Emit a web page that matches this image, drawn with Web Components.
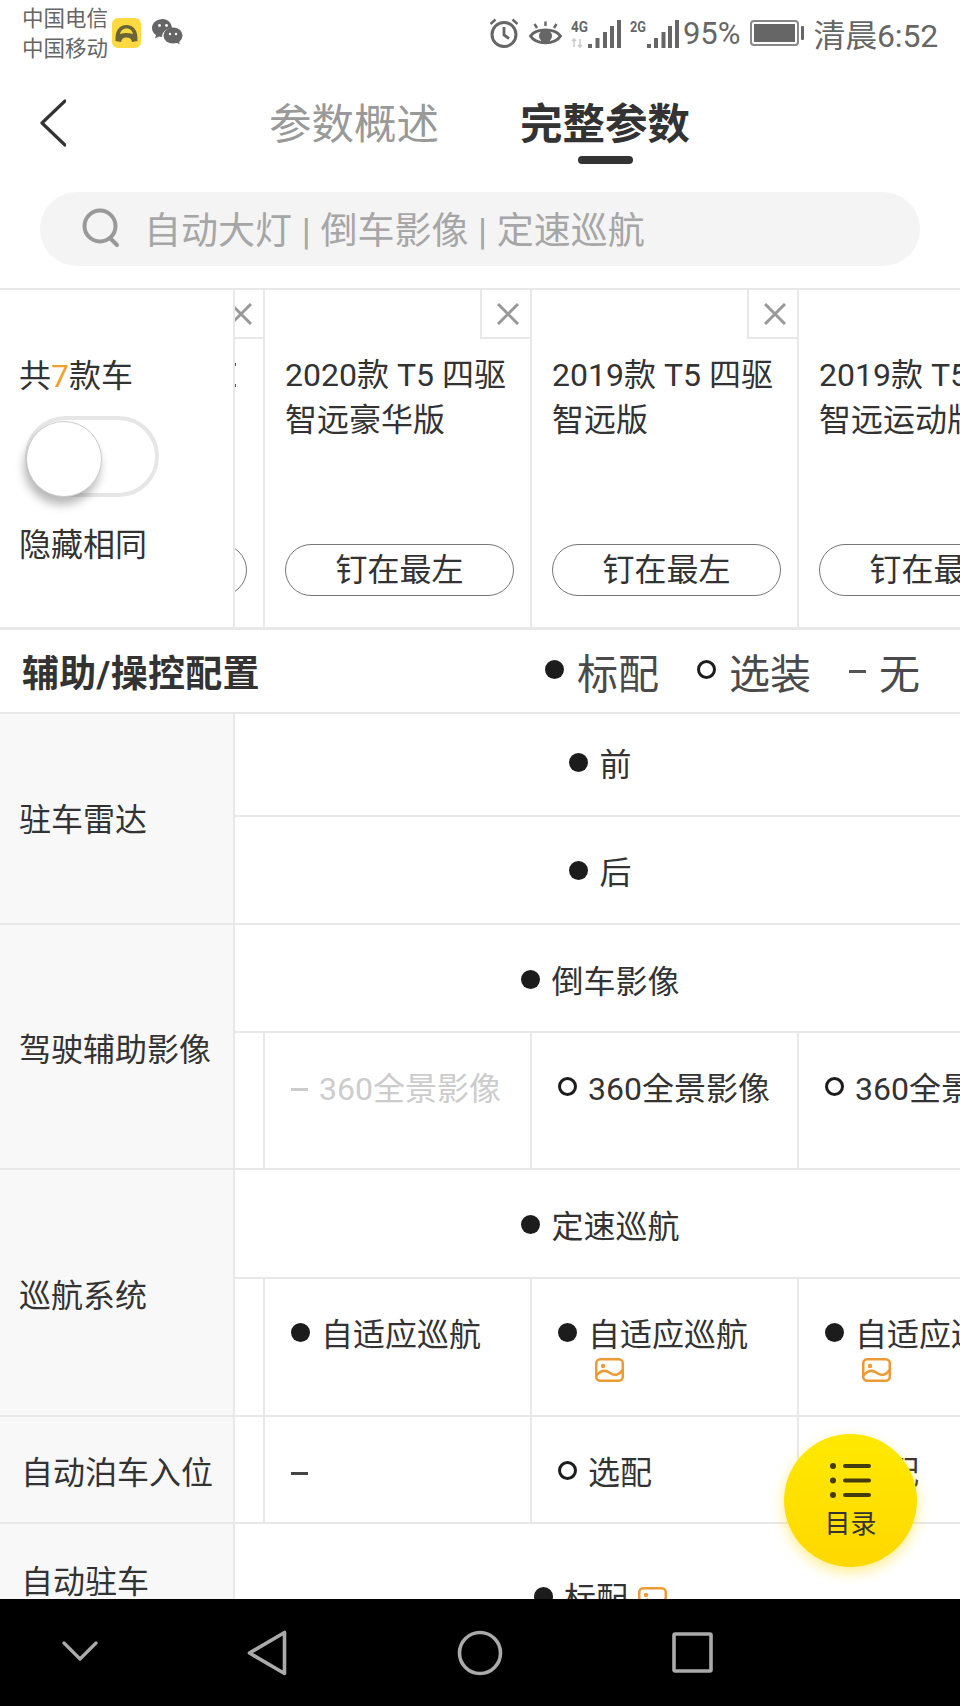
<!DOCTYPE html>
<html lang="zh-CN">
<head>
<meta charset="utf-8">
<title>完整参数</title>
<style>
  html, body { margin: 0; padding: 0; background: #fff; }
  body { font-family: Roboto, "Noto Sans CJK SC", sans-serif; color: #333; }
</style>
</head>
<body>
<app-screen>
  <status-bar></status-bar>
  <nav-tabs></nav-tabs>
  <search-box>自动大灯 | 倒车影像 | 定速巡航</search-box>
  <car-head>
    <car-cell stub></car-cell>
    <car-cell>2020款 T5 四驱<br>智远豪华版</car-cell>
    <car-cell>2019款 T5 四驱<br>智远版</car-cell>
    <car-cell>2019款 T5 四驱<br>智远运动版</car-cell>
  </car-head>
  <section-legend>辅助/操控配置</section-legend>
  <spec-table>
    <spec-group label="驻车雷达" lift="4">
      <spec-full h="103" top="28"><spec-val type="dot">前</spec-val></spec-full>
      <spec-full h="108"><spec-val type="dot">后</spec-val></spec-full>
    </spec-group>
    <spec-group label="驾驶辅助影像">
      <spec-full h="108" top="34"><spec-val type="dot">倒车影像</spec-val></spec-full>
      <spec-cells h="137">
        <spec-cell></spec-cell>
        <spec-cell><spec-val type="dash" muted>360全景影像</spec-val></spec-cell>
        <spec-cell><spec-val type="ring">360全景影像</spec-val></spec-cell>
        <spec-cell><spec-val type="ring">360全景影像</spec-val></spec-cell>
      </spec-cells>
    </spec-group>
    <spec-group label="巡航系统">
      <spec-full h="109" top="34"><spec-val type="dot">定速巡航</spec-val></spec-full>
      <spec-cells h="138">
        <spec-cell></spec-cell>
        <spec-cell><spec-val type="dot">自适应巡航</spec-val></spec-cell>
        <spec-cell><spec-val type="dot" pic="below">自适应巡航</spec-val></spec-cell>
        <spec-cell><spec-val type="dot" pic="below">自适应巡航</spec-val></spec-cell>
      </spec-cells>
    </spec-group>
    <spec-group label="自动泊车入位" indent="21">
      <spec-cells h="107">
        <spec-cell></spec-cell>
        <spec-cell><spec-val type="dash"></spec-val></spec-cell>
        <spec-cell><spec-val type="ring">选配</spec-val></spec-cell>
        <spec-cell><spec-val type="ring">选配</spec-val></spec-cell>
      </spec-cells>
    </spec-group>
    <spec-group label="自动驻车" indent="21">
      <spec-full h="112" top="52"><spec-val type="dot" pic="inline">标配</spec-val></spec-full>
    </spec-group>
  </spec-table>
  <bottom-nav></bottom-nav>
  <float-menu>目录</float-menu>
</app-screen>

<script>
function define(name, css, html, setup) {
  customElements.define(name, class extends HTMLElement {
    constructor() {
      super();
      this.attachShadow({ mode: 'open' });
    }
    connectedCallback() {
      this.shadowRoot.innerHTML = `<style>${css}</style>${typeof html === 'function' ? html(this) : html}`;
      if (setup) setup(this);
    }
  });
}

const line = '#e8e8e8';

define('app-screen', `
  :host { display: flex; flex-direction: column; position: relative; width: 960px; height: 1706px; overflow: hidden; background: #fff; }
`, `<slot></slot>`);

define('status-bar', `
  :host { display: flex; flex: 0 0 66px; height: 66px; padding: 0 22px; box-sizing: border-box; color: #666; }
  .carriers { font-size: 21.5px; line-height: 30px; padding-top: 4px; width: 88px; white-space: nowrap; }
  .left { display: flex; align-items: flex-start; }
  .app { margin: 18px 0 0 2px; }
  .chat { margin: 19px 0 0 11px; }
  .right { margin-left: auto; margin-right: 0; display: flex; align-items: center; height: 66px; }
  svg { display: block; }
  svg text { font-family: Roboto, sans-serif; font-weight: 700; font-size: 14px; fill: #666; }
  .pct { font-size: 31px; margin: 0 10px 0 4px; }
  .time { font-size: 32px; margin-left: 9px; letter-spacing: -.2px; white-space: nowrap; }
`, `
  <div class="left">
    <div class="carriers">中国电信<br>中国移动</div>
    <svg class="app" width="29" height="30" viewBox="0 0 29 30">
      <rect width="29" height="30" rx="6" fill="#ffd940"/>
      <path d="M3.500 23C3 12 7.500 7 14.500 7s11.500 5 11 16l-5.500 1c-.5-3-2-4.500-5.500-4.500S9.500 21 9 24z" fill="#6b6436"/>
      <path d="M8 16c1-4 3.500-5.500 6.500-5.500S20 12 21 16c-4-1.200-9-1.200-13 0z" fill="#ffd940"/>
    </svg>
    <svg class="chat" width="31" height="26" viewBox="0 0 31 26">
      <path d="M11 0C5 0 0 3.800 0 9c0 3 1.600 5.400 4 7l-1 3.500L7 17.500c1 .3 2 .4 3 .4 0-5 4.500-9 10-9C19.500 3.500 15.500 0 11 0z" fill="#666"/>
      <ellipse cx="21" cy="16.500" rx="9.500" ry="8" fill="#666"/>
      <path d="M24 23l3.500 2.500-.5-4.500z" fill="#666"/>
      <circle cx="7.500" cy="6.500" r="1.400" fill="#fff"/><circle cx="14.500" cy="6.500" r="1.400" fill="#fff"/>
      <circle cx="18" cy="15" r="1.200" fill="#fff"/><circle cx="24" cy="15" r="1.200" fill="#fff"/>
    </svg>
  </div>
  <div class="right">
    <svg width="30" height="30" viewBox="0 0 30 30" fill="none" stroke="#666" stroke-width="3">
      <circle cx="15" cy="16.500" r="12"/>
      <path d="M15 9v8l5 3.500" stroke-width="2.800"/>
      <path d="M1.500 6l5-4.500M28.500 6l-5-4.500" stroke-width="2.400"/>
    </svg>
    <svg style="margin-left:10px" width="33" height="30" viewBox="0 0 33 30">
      <path d="M1.500 18C7 10 26 10 31.500 18 26 27 7 27 1.500 18z" fill="none" stroke="#666" stroke-width="3"/>
      <circle cx="16.500" cy="18" r="6.500" fill="#666"/>
      <path d="M8 10L5.500 6M16.500 8V3.500M25 10l2.500-4" stroke="#666" stroke-width="2.400" fill="none"/>
    </svg>
    <svg style="margin-left:9px" width="50" height="30" viewBox="0 0 50 30">
      <text x="0" y="14" textLength="17" lengthAdjust="spacingAndGlyphs">4G</text>
      <path d="M3 29v-8M1 23l2-2 2 2M9 21v8M7 27l2 2 2-2" stroke="#ccc" stroke-width="1.600" fill="none"/>
      <g fill="#666">
        <rect x="17" y="26" width="4" height="4"/><rect x="24.500" y="20" width="4" height="10"/>
        <rect x="32" y="14" width="4" height="16"/><rect x="39" y="8" width="4" height="22"/>
        <rect x="46" y="2" width="4" height="28"/>
      </g>
    </svg>
    <svg style="margin-left:9px" width="49" height="30" viewBox="0 0 49 30">
      <text x="0" y="14" textLength="16" lengthAdjust="spacingAndGlyphs">2G</text>
      <g fill="#666">
        <rect x="17" y="26" width="4" height="4"/><rect x="24" y="20" width="4" height="10"/>
        <rect x="31.500" y="14" width="4" height="16"/><rect x="38" y="8" width="4" height="22"/>
        <rect x="45" y="2" width="4" height="28"/>
      </g>
    </svg>
    <span class="pct">95%</span>
    <svg width="54" height="26" viewBox="0 0 54 26">
      <rect x="1" y="1" width="47" height="24" rx="3" fill="none" stroke="#888" stroke-width="2"/>
      <rect x="4" y="4" width="41" height="18" fill="#666"/>
      <rect x="51" y="6" width="3" height="14" rx="1" fill="#666"/>
    </svg>
    <span class="time">清晨6:52</span>
  </div>
`);

define('nav-tabs', `
  :host { display: flex; flex: 0 0 114px; height: 114px; box-sizing: border-box; padding: 31px 0 0 40px; align-items: flex-start; }
  svg { display: block; margin-top: 2px; }
  .tabs { display: flex; gap: 81px; margin-left: 203px; }
  .tab { display: flex; flex-direction: column; align-items: center; font-size: 42.500px; line-height: 56px; color: #999; white-space: nowrap; }
  .on { color: #333; font-weight: 700; }
  .bar { width: 55px; height: 8px; margin-top: 3px; border-radius: 4px; background: #333; }
`, `
  <svg width="26" height="48" viewBox="0 0 26 48" fill="none" stroke="#333" stroke-width="3.200" stroke-linecap="round" stroke-linejoin="round">
    <path d="M25 2L2 24l23 22"/>
  </svg>
  <div class="tabs">
    <div class="tab">参数概述</div>
    <div class="tab on">完整参数<div class="bar"></div></div>
  </div>
`);

define('search-box', `
  :host { display: flex; align-items: center; flex: 0 0 74px; height: 74px; margin: 12px 40px 22px; padding-left: 42px; box-sizing: border-box; border-radius: 37px; background: #f4f4f4; color: #a6a6a6; font-size: 37px; white-space: nowrap; }
  svg { display: block; margin-right: 24px; margin-top: -2px; }
  .txt { margin-top: -2px; word-spacing: .5px; }
`, `
  <svg width="38" height="40" viewBox="0 0 38 40" fill="none" stroke="#999" stroke-width="4">
    <circle cx="18" cy="18" r="15.500"/>
    <path d="M28 30l7 7" stroke-linecap="round"/>
  </svg>
  <span class="txt"><slot></slot></span>
`);

define('car-head', `
  :host { display: flex; flex: 0 0 342px; height: 342px; box-sizing: border-box; border-top: 2px solid ${line}; border-bottom: 3px solid ${line}; position: relative; }
  .side { flex: 0 0 235px; box-sizing: border-box; padding: 63px 0 0 19px; border-right: 2px solid ${line}; background: #fff; position: relative; z-index: 1; font-size: 32px; line-height: 46px; white-space: nowrap; }
  .side b { font-weight: 400; color: #f0a030; }
  toggle-switch { margin: 17px 0 25px 6px; }
  .strip { flex: 1; min-width: 0; overflow: hidden; }
  .row { display: flex; height: 100%; margin-left: -237px; }
`, `
  <div class="side">
    <div>共<b>7</b>款车</div>
    <toggle-switch></toggle-switch>
    <div>隐藏相同</div>
  </div>
  <div class="strip"><div class="row"><slot></slot></div></div>
`);

define('toggle-switch', `
  :host { display: block; position: relative; width: 134px; height: 81px; box-sizing: border-box; border: 4px solid #e6e6e6; border-radius: 41px; }
  .knob { position: absolute; left: -3px; top: 1px; width: 76px; height: 76px; box-sizing: border-box; border-radius: 50%; background: #fff; border: 1px solid #ccc; box-shadow: -2px 8px 10px rgba(0,0,0,.28); }
`, `<div class="knob"></div>`);

define('car-cell', `
  :host { display: flex; flex-direction: column; flex: 0 0 267px; width: 267px; height: 100%; box-sizing: border-box; padding: 63px 16px 31px 20px; border-right: 2px solid ${line}; position: relative; font-size: 32px; line-height: 45px; }
  .x { position: absolute; right: 0; top: 0; width: 50px; height: 49px; box-sizing: border-box; padding-left: 4px; border-left: 2px solid ${line}; border-bottom: 2px solid ${line}; display: flex; align-items: center; justify-content: center; }
  .name { white-space: nowrap; }
  .sliver { display: block; width: 2px; height: 24px; margin: 10px 0 0 216px; box-sizing: border-box; border-top: 3px solid #555; border-bottom: 3px solid #555; }
  .pin { margin-top: auto; height: 52px; box-sizing: border-box; padding-top: 1px; border: 1.500px solid #777; border-radius: 26px; display: flex; align-items: center; justify-content: center; white-space: nowrap; font-size: 32px; }
  svg { display: block; }
`, el => {
  const stub = el.hasAttribute('stub');
  return `
  <div class="x">
    <svg width="22" height="22" viewBox="0 0 22 22" stroke="#999" stroke-width="3"><path d="M1 1l20 20M21 1L1 21"/></svg>
  </div>
  ${stub ? '<i class="sliver"></i>' : '<div class="name"><slot></slot></div>'}
  <div class="pin">${stub ? '' : '钉在最左'}</div>`;
});

define('section-legend', `
  :host { display: flex; align-items: center; flex: 0 0 84px; height: 84px; box-sizing: border-box; padding: 0 40px 0 22px; border-bottom: 2px solid ${line}; white-space: nowrap; }
  .title { font-size: 37px; font-weight: 700; color: #333; letter-spacing: .3px; }
  .keys { margin-left: auto; display: flex; align-items: center; font-size: 41px; color: #4a4a4a; }
  .key { display: flex; align-items: center; gap: 13px; margin-left: 38px; }
  .key i { display: block; }
  .dot { width: 19px; height: 19px; margin-top: -3px; border-radius: 50%; background: #1c1c1c; }
  .ring { width: 19px; height: 19px; margin-top: -3px; box-sizing: border-box; border-radius: 50%; border: 3.500px solid #1c1c1c; }
  .dash { width: 17px; height: 3px; background: #555; }
`, `
  <div class="title"><slot></slot></div>
  <div class="keys">
    <div class="key"><i class="dot"></i>标配</div>
    <div class="key"><i class="ring"></i>选装</div>
    <div class="key"><i class="dash"></i>无</div>
  </div>
`);

define('spec-table', `
  :host { display: block; flex: 1; min-height: 0; overflow: hidden; }
`, `<slot></slot>`);

define('spec-group', `
  :host { display: grid; grid-template-columns: 235px minmax(0, 1fr); }
  .label { display: flex; align-items: center; box-sizing: border-box; background: #f8f8f8; border-right: 2px solid ${line}; border-bottom: 2px solid ${line}; font-size: 32px; white-space: nowrap; position: relative; z-index: 1; }
  .rows { min-width: 0; overflow: hidden; }
`, el => `
  <div class="label" style="padding-left:${el.getAttribute('indent') || 19}px;padding-bottom:${el.getAttribute('lift') || 0}px">${el.getAttribute('label')}</div>
  <div class="rows"><slot></slot></div>
`);

define('spec-full', `
  :host { display: flex; justify-content: center; box-sizing: border-box; padding-left: 6px; border-bottom: 2px solid ${line}; }
`, `<slot></slot>`, el => {
  el.style.height = el.getAttribute('h') + 'px';
  el.style.paddingTop = (el.getAttribute('top') || 33) + 'px';
});

define('spec-cells', `
  :host { display: flex; box-sizing: border-box; margin-left: -237px; border-bottom: 2px solid ${line}; }
`, `<slot></slot>`, el => {
  el.style.height = el.getAttribute('h') + 'px';
});

define('spec-cell', `
  :host { display: block; flex: 0 0 267px; width: 267px; box-sizing: border-box; padding: 33px 0 0 26px; border-right: 2px solid ${line}; }
`, `<slot></slot>`);

const picIcon = `<svg width="29" height="24" viewBox="0 0 29 24" fill="none" stroke="#ec9a35" stroke-width="2.500">
  <rect x="1.250" y="1.250" width="26.500" height="21.500" rx="4"/>
  <circle cx="8" cy="8" r="2.200" fill="#ec9a35" stroke="none"/>
  <path d="M1.500 17.500C6 12 11 12 15 15s9 2.500 12.500-3"/>
</svg>`;

define('spec-val', `
  :host { display: flex; align-items: flex-start; font-size: 32px; line-height: 46px; color: #333; white-space: nowrap; }
  :host([muted]) { color: #ccc; }
  .mark { flex: none; display: block; margin-right: 11px; }
  .dot { width: 19px; height: 19px; margin-top: 11px; border-radius: 50%; background: #1c1c1c; }
  .ring { width: 19px; height: 19px; margin-top: 11px; box-sizing: border-box; border-radius: 50%; border: 3.500px solid #1c1c1c; }
  .dash { width: 17px; height: 3px; margin-top: 22px; background: #444; }
  :host([muted]) .dash { background: #ccc; }
  .below svg { display: block; margin: 0 0 0 7px; }
  .inline { display: block; margin: 11px 0 0 10px; }
  .inline svg { display: block; }
`, el => {
  const pic = el.getAttribute('pic');
  return `<i class="mark ${el.getAttribute('type')}"></i>` +
    `<div class="${pic === 'below' ? 'below' : ''}"><slot></slot>${pic === 'below' ? picIcon : ''}</div>` +
    (pic === 'inline' ? `<div class="inline">${picIcon}</div>` : '');
});

define('bottom-nav', `
  :host { display: flex; align-items: center; flex: 0 0 107px; height: 107px; box-sizing: border-box; padding-left: 62px; background: #000; position: relative; z-index: 2; }
  svg { display: block; flex: none; }
`, `
  <svg style="margin-top:-4px" width="36" height="22" viewBox="0 0 36 22" fill="none" stroke="#aaa" stroke-width="3.200" stroke-linecap="round" stroke-linejoin="round"><path d="M2 3l16 16L34 3"/></svg>
  <svg style="margin-left:149px" width="40" height="46" viewBox="0 0 40 46" fill="none" stroke="#aaa" stroke-width="3.600" stroke-linejoin="round"><path d="M37.500 2.500v41L2.500 23z"/></svg>
  <svg style="margin-left:170px" width="46" height="46" viewBox="0 0 46 46" fill="none" stroke="#aaa" stroke-width="3.600"><circle cx="23" cy="23" r="20.500"/></svg>
  <svg style="margin-left:169px" width="41" height="41" viewBox="0 0 41 41" fill="none" stroke="#aaa" stroke-width="3.600" stroke-linejoin="round"><rect x="2" y="2" width="37" height="37" rx="1"/></svg>
`);

define('float-menu', `
  :host { position: absolute; right: 43px; bottom: 139px; z-index: 3; width: 133px; height: 133px; box-sizing: border-box; padding-top: 28px; border-radius: 50%; display: flex; flex-direction: column; align-items: center; background: linear-gradient(#ffe900, #ffd800); box-shadow: 0 5px 14px rgba(255,214,0,.45); color: #333; font-size: 26px; line-height: 34px; }
  svg { display: block; margin-bottom: 9px; }
`, `
  <svg width="42" height="36" viewBox="0 0 42 36" fill="#443c10" stroke="none">
    <circle cx="3" cy="4" r="3"/><circle cx="3" cy="18.500" r="3"/><circle cx="3" cy="33" r="3"/>
    <rect x="13" y="2" width="28" height="4" rx="2"/><rect x="13" y="16.500" width="28" height="4" rx="2"/><rect x="13" y="31" width="28" height="4" rx="2"/>
  </svg>
  <slot></slot>
`);
</script>
</body>
</html>
